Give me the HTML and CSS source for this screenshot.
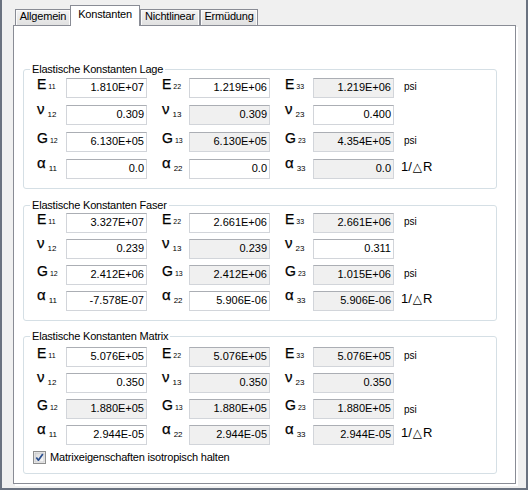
FILE: index.html
```html
<!DOCTYPE html>
<html>
<head>
<meta charset="utf-8">
<link rel="stylesheet" href="styles.css">
</head>
<body>
<div class="window">
  <div class="tabs">
    <div class="tab t1">Allgemein</div>
    <div class="tab t2 sel">Konstanten</div>
    <div class="tab t3">Nichtlinear</div>
    <div class="tab t4">Ermüdung</div>
  </div>
  <div class="panel">

    <div class="group g1">
      <div class="legend">Elastische Konstanten Lage</div>
      <div class="rows">
        <div class="row">
          <div class="lbl c1"><span class="sym">E</span><span class="sub">11</span></div>
          <div class="fld">1.810E+07</div>
          <div class="lbl c2"><span class="sym">E</span><span class="sub">22</span></div>
          <div class="fld">1.219E+06</div>
          <div class="lbl c3"><span class="sym">E</span><span class="sub">33</span></div>
          <div class="fld dis">1.219E+06</div>
          <div class="unit psi">psi</div>
        </div>
        <div class="row">
          <div class="lbl c1 gr"><span class="sym">ν</span><span class="sub">12</span></div>
          <div class="fld">0.309</div>
          <div class="lbl c2 gr"><span class="sym">ν</span><span class="sub">13</span></div>
          <div class="fld dis">0.309</div>
          <div class="lbl c3 gr"><span class="sym">ν</span><span class="sub">23</span></div>
          <div class="fld">0.400</div>
        </div>
        <div class="row">
          <div class="lbl c1"><span class="sym">G</span><span class="sub">12</span></div>
          <div class="fld">6.130E+05</div>
          <div class="lbl c2"><span class="sym">G</span><span class="sub">13</span></div>
          <div class="fld dis">6.130E+05</div>
          <div class="lbl c3"><span class="sym">G</span><span class="sub">23</span></div>
          <div class="fld dis">4.354E+05</div>
          <div class="unit psi">psi</div>
        </div>
        <div class="row">
          <div class="lbl c1 gr"><span class="sym">α</span><span class="sub">11</span></div>
          <div class="fld">0.0</div>
          <div class="lbl c2 gr"><span class="sym">α</span><span class="sub">22</span></div>
          <div class="fld">0.0</div>
          <div class="lbl c3 gr"><span class="sym">α</span><span class="sub">33</span></div>
          <div class="fld dis">0.0</div>
          <div class="unit temp">1/<span class="tri">△</span>R</div>
        </div>
      </div>
    </div>

    <div class="group g2">
      <div class="legend">Elastische Konstanten Faser</div>
      <div class="rows">
        <div class="row">
          <div class="lbl c1"><span class="sym">E</span><span class="sub">11</span></div>
          <div class="fld">3.327E+07</div>
          <div class="lbl c2"><span class="sym">E</span><span class="sub">22</span></div>
          <div class="fld">2.661E+06</div>
          <div class="lbl c3"><span class="sym">E</span><span class="sub">33</span></div>
          <div class="fld dis">2.661E+06</div>
          <div class="unit psi">psi</div>
        </div>
        <div class="row">
          <div class="lbl c1 gr"><span class="sym">ν</span><span class="sub">12</span></div>
          <div class="fld">0.239</div>
          <div class="lbl c2 gr"><span class="sym">ν</span><span class="sub">13</span></div>
          <div class="fld dis">0.239</div>
          <div class="lbl c3 gr"><span class="sym">ν</span><span class="sub">23</span></div>
          <div class="fld">0.311</div>
        </div>
        <div class="row">
          <div class="lbl c1"><span class="sym">G</span><span class="sub">12</span></div>
          <div class="fld">2.412E+06</div>
          <div class="lbl c2"><span class="sym">G</span><span class="sub">13</span></div>
          <div class="fld dis">2.412E+06</div>
          <div class="lbl c3"><span class="sym">G</span><span class="sub">23</span></div>
          <div class="fld dis">1.015E+06</div>
          <div class="unit psi">psi</div>
        </div>
        <div class="row">
          <div class="lbl c1 gr"><span class="sym">α</span><span class="sub">11</span></div>
          <div class="fld">-7.578E-07</div>
          <div class="lbl c2 gr"><span class="sym">α</span><span class="sub">22</span></div>
          <div class="fld">5.906E-06</div>
          <div class="lbl c3 gr"><span class="sym">α</span><span class="sub">33</span></div>
          <div class="fld dis">5.906E-06</div>
          <div class="unit temp">1/<span class="tri">△</span>R</div>
        </div>
      </div>
    </div>

    <div class="group g3">
      <div class="legend">Elastische Konstanten Matrix</div>
      <div class="rows">
        <div class="row">
          <div class="lbl c1"><span class="sym">E</span><span class="sub">11</span></div>
          <div class="fld">5.076E+05</div>
          <div class="lbl c2"><span class="sym">E</span><span class="sub">22</span></div>
          <div class="fld dis">5.076E+05</div>
          <div class="lbl c3"><span class="sym">E</span><span class="sub">33</span></div>
          <div class="fld dis">5.076E+05</div>
          <div class="unit psi">psi</div>
        </div>
        <div class="row">
          <div class="lbl c1 gr"><span class="sym">ν</span><span class="sub">12</span></div>
          <div class="fld">0.350</div>
          <div class="lbl c2 gr"><span class="sym">ν</span><span class="sub">13</span></div>
          <div class="fld dis">0.350</div>
          <div class="lbl c3 gr"><span class="sym">ν</span><span class="sub">23</span></div>
          <div class="fld dis">0.350</div>
        </div>
        <div class="row">
          <div class="lbl c1"><span class="sym">G</span><span class="sub">12</span></div>
          <div class="fld dis">1.880E+05</div>
          <div class="lbl c2"><span class="sym">G</span><span class="sub">13</span></div>
          <div class="fld dis">1.880E+05</div>
          <div class="lbl c3"><span class="sym">G</span><span class="sub">23</span></div>
          <div class="fld dis">1.880E+05</div>
          <div class="unit psi low">psi</div>
        </div>
        <div class="row">
          <div class="lbl c1 gr"><span class="sym">α</span><span class="sub">11</span></div>
          <div class="fld">2.944E-05</div>
          <div class="lbl c2 gr"><span class="sym">α</span><span class="sub">22</span></div>
          <div class="fld dis">2.944E-05</div>
          <div class="lbl c3 gr"><span class="sym">α</span><span class="sub">33</span></div>
          <div class="fld dis">2.944E-05</div>
          <div class="unit temp">1/<span class="tri">△</span>R</div>
        </div>
      </div>
      <div class="chk">
        <svg class="box" width="13" height="13" viewBox="0 0 13 13">
          <defs>
            <linearGradient id="cbg" x1="0" y1="0" x2="1" y2="1">
              <stop offset="0" stop-color="#d8d8d8"/>
              <stop offset="1" stop-color="#fbfbfb"/>
            </linearGradient>
          </defs>
          <rect x="0.5" y="0.5" width="12" height="12" fill="#f4f4f4" stroke="#8e8f8f"/>
          <rect x="2" y="2" width="9" height="9" fill="url(#cbg)" stroke="#c2c3c5" stroke-width="0.8"/>
          <path d="M3.3 6.4 L5.4 9.2 L9.8 2.9" fill="none" stroke="#2a4f8f" stroke-width="1.7" stroke-linejoin="round"/>
        </svg>
        <span class="chktext">Matrixeigenschaften isotropisch halten</span>
      </div>
    </div>

  </div>
</div>
</body>
</html>
```

FILE: styles.css
```css
* {
  box-sizing: border-box;
}

body {
  margin: 0;
  background: #f0f0f0;
  font-family: "Liberation Sans", Arial, sans-serif;
  color: #000;
}

.window {
  width: 528px;
  height: 490px;
  background: #f0f0f0;
  border-left: 2px solid #6a7280;
  border-right: 2px solid #6a7280;
  border-bottom: 2px solid #6a7280;
  padding-top: 5px;
}

/* ---------- tabs ---------- */
.tabs {
  display: flex;
  align-items: flex-end;
  height: 21px;
  margin-left: 13px;
  margin-bottom: -1px;
  font-size: 11px;
  letter-spacing: -0.2px;
}

.tab {
  height: 16px;
  margin-bottom: 1px;
  border: 1px solid #898c95;
  border-bottom: none;
  background: linear-gradient(#f3f3f3, #e9e9e9 50%, #e1e1e1);
  box-shadow: inset 1px 1px 0 #fbfbfb, inset -1px 0 0 #fbfbfb;
  text-align: center;
  line-height: 13px;
  white-space: nowrap;
}

.tab.sel {
  height: 21px;
  margin-bottom: 0;
  padding-top: 2px;
  background: #fff;
  box-shadow: none;
  position: relative;
  z-index: 1;
}

.t1 { width: 56px; }
.t2 { width: 70px; margin-left: -1px; }
.t3 { width: 60px; }
.t4 { width: 58px; }

/* ---------- panel ---------- */
.panel {
  margin-left: 11px;
  width: 503px;
  height: 459px;
  background: #fff;
  border: 1px solid #898c95;
  box-shadow: 2px 2px 0 #ffffff;
  padding-top: 43px;
}

.group {
  position: relative;
  margin-left: 9px;
  width: 474px;
  border: 1px solid #d5dfe5;
  border-radius: 3px;
  padding-left: 13px;
}

.g1 { padding-top: 8px; padding-bottom: 9px; }
.g2 { margin-top: 16px; padding-top: 7px; padding-bottom: 9px; }
.g3 { margin-top: 15px; padding-top: 10px; padding-bottom: 9px; }

.legend {
  position: absolute;
  top: -7px;
  left: 6px;
  padding: 0 2px;
  background: #fff;
  font-size: 11px;
  line-height: 13px;
  letter-spacing: -0.2px;
  white-space: nowrap;
}

.rows {
  display: flex;
  flex-direction: column;
  gap: 6px;
}

.g1 .rows { gap: 7px; }

.row {
  display: flex;
  height: 20px;
}

/* ---------- labels ---------- */
.lbl {
  font-size: 14px;
  line-height: 12px;
  white-space: nowrap;
}

.lbl.c1 { width: 29px; }
.lbl.c2 { width: 27px; margin-left: 15px; }
.lbl.c3 { width: 28px; margin-left: 15px; }

.sym {
  font-size: 14px;
  -webkit-text-stroke: 0.25px #000;
}

.sub {
  font-size: 7px;
  margin-left: 2px;
}

.lbl.gr {
  line-height: 7px;
}

.lbl.gr .sym {
  font-size: 15px;
}

.lbl.gr .sub {
  font-size: 8px;
  vertical-align: -3px;
  margin-left: 3px;
}

/* ---------- fields ---------- */
.fld {
  width: 81px;
  height: 20px;
  border: 1px solid #d2d5da;
  border-top-color: #abaeb4;
  background: #fff;
  font-size: 11px;
  line-height: 16px;
  padding: 0 2px 2px 0;
  text-align: right;
  white-space: nowrap;
}

.fld.dis {
  background: #f0f0f0;
}

/* ---------- units ---------- */
.unit {
  white-space: nowrap;
}

.unit.psi {
  margin-left: 10px;
  font-size: 10px;
  line-height: 18px;
}

.unit.psi.low {
  line-height: 21px;
}

.unit.temp {
  margin-left: 7px;
  font-size: 13px;
  line-height: 15px;
}

.tri {
  font-family: "DejaVu Sans", sans-serif;
  font-size: 12px;
  margin: 0 1px;
}

/* ---------- checkbox ---------- */
.chk {
  display: flex;
  align-items: flex-start;
  height: 13px;
  margin-top: 6px;
  margin-left: -4px;
}

.chk .box {
  display: block;
  flex: none;
}

.chktext {
  margin-left: 4px;
  font-size: 11px;
  line-height: 13px;
  letter-spacing: -0.2px;
  white-space: nowrap;
}
```
